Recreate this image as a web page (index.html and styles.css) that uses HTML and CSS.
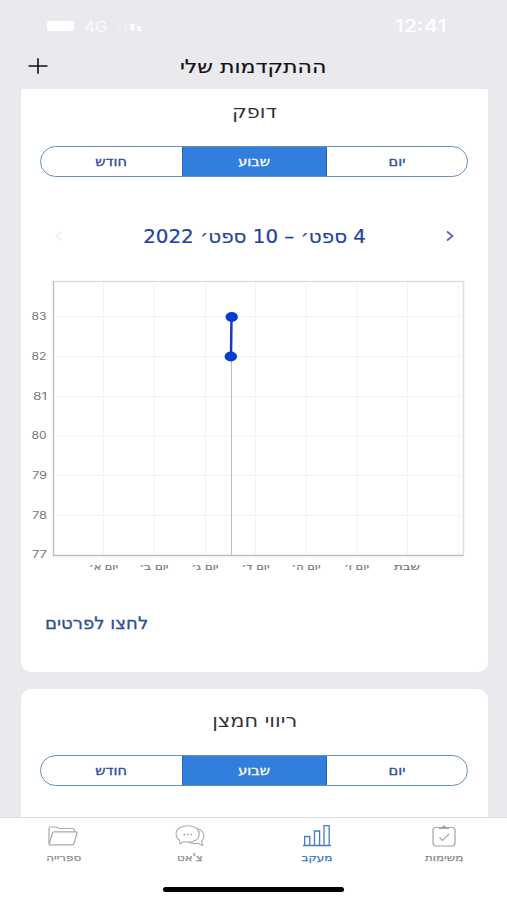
FILE: index.html
```
<!DOCTYPE html>
<html lang="he" dir="rtl">
<head>
<meta charset="utf-8">
<title>ההתקדמות שלי</title>
<link rel="stylesheet" href="styles.css">
</head>
<body>
<div class="phone">
  <div class="status">
    <span class="clock">12:41</span>
    <div class="signals">
      <svg class="bars" width="24" height="10" viewBox="0 0 24 10"><g fill="#fff"><rect x="0" y="0" width="3" height="10" opacity=".15"/><rect x="6" y="2" width="4" height="8" opacity=".3"/><rect x="12.500" y="3" width="4" height="6.500" rx="1" opacity=".9"/><rect x="19" y="5" width="4" height="5" rx="1"/></g></svg>
      <span class="network">4G</span>
      <span class="battery"></span>
    </div>
  </div>
  <header class="header">
    <h1><span>ההתקדמות שלי</span></h1>
    <svg class="plus" width="20" height="16" viewBox="0 0 20 16"><path d="M.5 8h19M10 .2v15.600" stroke="#111116" stroke-width="1.600" fill="none"/></svg>
  </header>
  <main class="content">
    <section class="card pulse">
      <h2><span>דופק</span></h2>
      <div class="segments"><span class="day"><b>יום</b></span><span class="week"><b>שבוע</b></span><span class="month"><b>חודש</b></span></div>
      <div class="range">
        <svg width="8" height="12" viewBox="0 0 8 12"><path d="M1 1.500 6.500 6 1 10.500" fill="none" stroke="#5a62b4" stroke-width="1.700"/></svg>
        <span class="dates">4 ספט׳ – 10 ספט׳ 2022</span>
        <svg width="8" height="12" viewBox="0 0 8 12"><path d="M7 1.500 1.500 6 7 10.500" fill="none" stroke="#ececee" stroke-width="1.500"/></svg>
      </div>
      <svg class="chart" width="467" height="300" viewBox="21 275 467 300">
        <path class="grid" d="M103.500 282v273M154 282v273M205.500 282v273M255.500 282v273M306 282v273M357 282v273M407.500 282v273M458.500 282v273M54 316.500h409M54 356.500h409M54 396.500h409M54 436h409M54 475.500h409M54 515.500h409"/>
        <path class="frame" d="M53 281.500h410.500v274"/>
        <path class="axis" d="M53.500 281v274.500h410"/>
        <path class="drop" d="M231.500 357v198"/>
        <path class="series" d="M231 356.500 231.500 317"/>
        <ellipse class="dot" cx="231.700" cy="317" rx="6.200" ry="5"/>
        <ellipse class="dot" cx="230.800" cy="356.500" rx="6.200" ry="5"/>
        <g class="values">
          <text x="31.500" y="320" textLength="15" lengthAdjust="spacingAndGlyphs">83</text>
          <text x="31.500" y="360" textLength="15" lengthAdjust="spacingAndGlyphs">82</text>
          <text x="33" y="399.500" textLength="14" lengthAdjust="spacingAndGlyphs">81</text>
          <text x="31.500" y="439" textLength="15" lengthAdjust="spacingAndGlyphs">80</text>
          <text x="32" y="479" textLength="15" lengthAdjust="spacingAndGlyphs">79</text>
          <text x="32" y="518.500" textLength="15" lengthAdjust="spacingAndGlyphs">78</text>
          <text x="32" y="558" textLength="15" lengthAdjust="spacingAndGlyphs">77</text>
        </g>
        <g class="days">
          <text x="103.500" y="570" textLength="29" lengthAdjust="spacingAndGlyphs">יום א׳</text>
          <text x="154" y="570" textLength="29" lengthAdjust="spacingAndGlyphs">יום ב׳</text>
          <text x="205" y="570" textLength="27" lengthAdjust="spacingAndGlyphs">יום ג׳</text>
          <text x="255.500" y="570" textLength="28" lengthAdjust="spacingAndGlyphs">יום ד׳</text>
          <text x="306" y="570" textLength="29" lengthAdjust="spacingAndGlyphs">יום ה׳</text>
          <text x="356.500" y="570" textLength="25" lengthAdjust="spacingAndGlyphs">יום ו׳</text>
          <text x="407" y="570" textLength="26" lengthAdjust="spacingAndGlyphs">שבת</text>
        </g>
      </svg>
      <div class="details"><a>לחצו לפרטים</a></div>
    </section>
    <section class="card oxygen">
      <h2><span>ריווי חמצן</span></h2>
      <div class="segments"><span class="day"><b>יום</b></span><span class="week"><b>שבוע</b></span><span class="month"><b>חודש</b></span></div>
    </section>
  </main>
  <nav class="tabs">
    <div class="tab"><svg width="26" height="24" viewBox="0 0 26 24"><g fill="none" stroke="#a4a4a7" stroke-width="1.200"><rect x="2" y="3.500" width="22" height="18.500" rx="3"/><path d="m8.500 13.500 3 3L18 10"/></g><path d="M8 5V3h3q2-3.500 4 0h3v2z" fill="#a4a4a7"/></svg><span>משימות</span></div>
    <div class="tab active"><svg width="28" height="24" viewBox="0 0 28 24"><path d="M0 21.500h28M1.700 21.500v-9h5.100v9M11.500 21.500V7h5.100v14.500M21 21.500V1.700h5.200v19.800" fill="none" stroke="#477bbd" stroke-width="1.300"/></svg><span>מעקב</span></div>
    <div class="tab"><svg width="30" height="24" viewBox="0 0 30 24"><g fill="none" stroke="#adadb0" stroke-width="1.100"><path d="M4.500 16.200C0 13 0 6.800 4.500 4c5-3 13-3 17 .2 4 3.300 3.500 9.300-.8 12-3.500 2-8 2.300-11.700 1.300L5 19.800z"/><path d="M22.500 4.800c7 2 8 9 4 12.500l1.300 4.200-5-2.300c-4 .8-7.500.2-9.500-1.400"/></g><g fill="#a4a4a7"><circle cx="9.300" cy="10.500" r=".9"/><circle cx="12.700" cy="10.500" r=".9"/><circle cx="16.100" cy="10.500" r=".9"/></g></svg><span>צ'אט</span></div>
    <div class="tab"><svg width="30" height="24" viewBox="0 0 30 24"><path d="M1 20.500V4.500Q1 3 2.500 3h6L11 4.500h13.500q2 0 2 2V8M1 20.500 4.500 9q.4-1.200 1.700-1.200h22q1.200 0 .8 1.200l-3 10.500q-.4 1.300-1.700 1.300H1.500L1 20" fill="none" stroke="#a9a9ac" stroke-width="1.200"/></svg><span>ספרייה</span></div>
  </nav>
  <div class="home"><span></span></div>
</div>
</body>
</html>
```
FILE: styles.css
```
* { box-sizing: border-box; }
body { margin: 0; font-family: "DejaVu Sans", "Liberation Sans", sans-serif; background: #eaeaee; }
.phone { width: 507px; height: 900px; display: flex; flex-direction: column; overflow: hidden; background: #eaeaee; }
.status { height: 44px; padding: 8px 61px 0 47px; flex: none; display: flex; justify-content: space-between; align-items: center; color: #fff; }
.clock { font: 500 17px Inter, sans-serif; transform: scaleX(1.280); transform-origin: right; }
.signals { display: flex; align-items: center; gap: 9px; }
.network { font: 15px Inter, sans-serif; width: 26px; text-align: center; opacity: .75; transform: scaleX(1.150); }
.battery { width: 27px; height: 10px; border-radius: 2px; background: #fff; }
.header { height: 45px; flex: none; display: grid; grid-template-columns: 1fr auto 1fr; align-items: center; padding: 0 28px 1px; color: #111116; }
h1, h2 { margin: 0; font-weight: 400; text-align: center; }
h1 { grid-column: 2; font-size: 19px; line-height: 24px; -webkit-text-stroke: .2px currentColor; }
h1 span, h2 span { display: inline-block; transform: scaleX(1.160); }
.plus { justify-self: end; }
.content { flex: 1; min-height: 0; overflow: hidden; padding: 0 19px 0 21px; }
.card { background: #fff; border-radius: 10px; overflow: hidden; }
.pulse { height: 583px; border-radius: 2px 2px 10px 10px; }
.oxygen { height: 180px; margin-top: 17px; }
h2 { font-size: 18px; line-height: 24px; padding-top: 11px; color: #343438; }
.oxygen h2 { padding-top: 20px; }
.segments { display: flex; height: 31px; margin: 22px 20px 0 19px; border: 1px solid #6990b9; border-radius: 16px; overflow: hidden; color: #2c4c9a; font-size: 12px; }
.segments span { display: flex; align-items: center; justify-content: center; }
.segments b { font-weight: 400; -webkit-text-stroke: .3px currentColor; transform: scaleX(1.210); }
.day, .month { flex: 1; }
.week { width: 145px; background: #317edc; color: #fff; border: solid #2865b8; border-width: 0 1px; }
.oxygen .segments { margin-top: 22px; }
.range { height: 98px; padding: 20px 34px 0; display: flex; align-items: center; justify-content: space-between; color: #23439f; }
.dates { font-size: 19px; transform: scaleX(1.045); -webkit-text-stroke: .2px currentColor; }
.chart { display: block; }
.grid { stroke: #f3f3f4; fill: none; }
.frame { stroke: #dedee0; stroke-width: 1.500; fill: none; }
.axis { stroke: #bdbdbf; stroke-width: 1.400; fill: none; }
.drop { stroke: #bcbcbf; }
.series { stroke: #123eb0; stroke-width: 2.500; }
.dot { fill: #063bd0; }
.values { font: 10.500px Inter, sans-serif; fill: #77777b; direction: ltr; }
.values text { text-anchor: start; }
.days { font-size: 10px; fill: #77777b; stroke: #77777b; stroke-width: .2px; direction: rtl; }
.days text { text-anchor: middle; }
.details { padding: 34px 0 0 24px; text-align: left; color: #2d4d97; font-size: 17px; line-height: 28px; }
.details a { display: inline-block; transform: scaleX(1.065); transform-origin: left; -webkit-text-stroke: .3px currentColor; }
.tabs { height: 62px; flex: none; background: #fff; border-top: 1px solid #dddde0; display: flex; justify-content: space-between; padding: 6px 0 0; }
.tab { width: 127px; display: flex; flex-direction: column; align-items: center; font-size: 10px; color: #8b8b8f; line-height: 18px; gap: 1px; }
.tab span { transform: scaleX(1.190); -webkit-text-stroke: .25px currentColor; }
.tab.active { color: #3975c5; }
.home { height: 21px; flex: none; background: #fff; display: flex; justify-content: center; padding-top: 8px; }
.home span { width: 181px; height: 5px; border-radius: 3px; background: #000; }
```
